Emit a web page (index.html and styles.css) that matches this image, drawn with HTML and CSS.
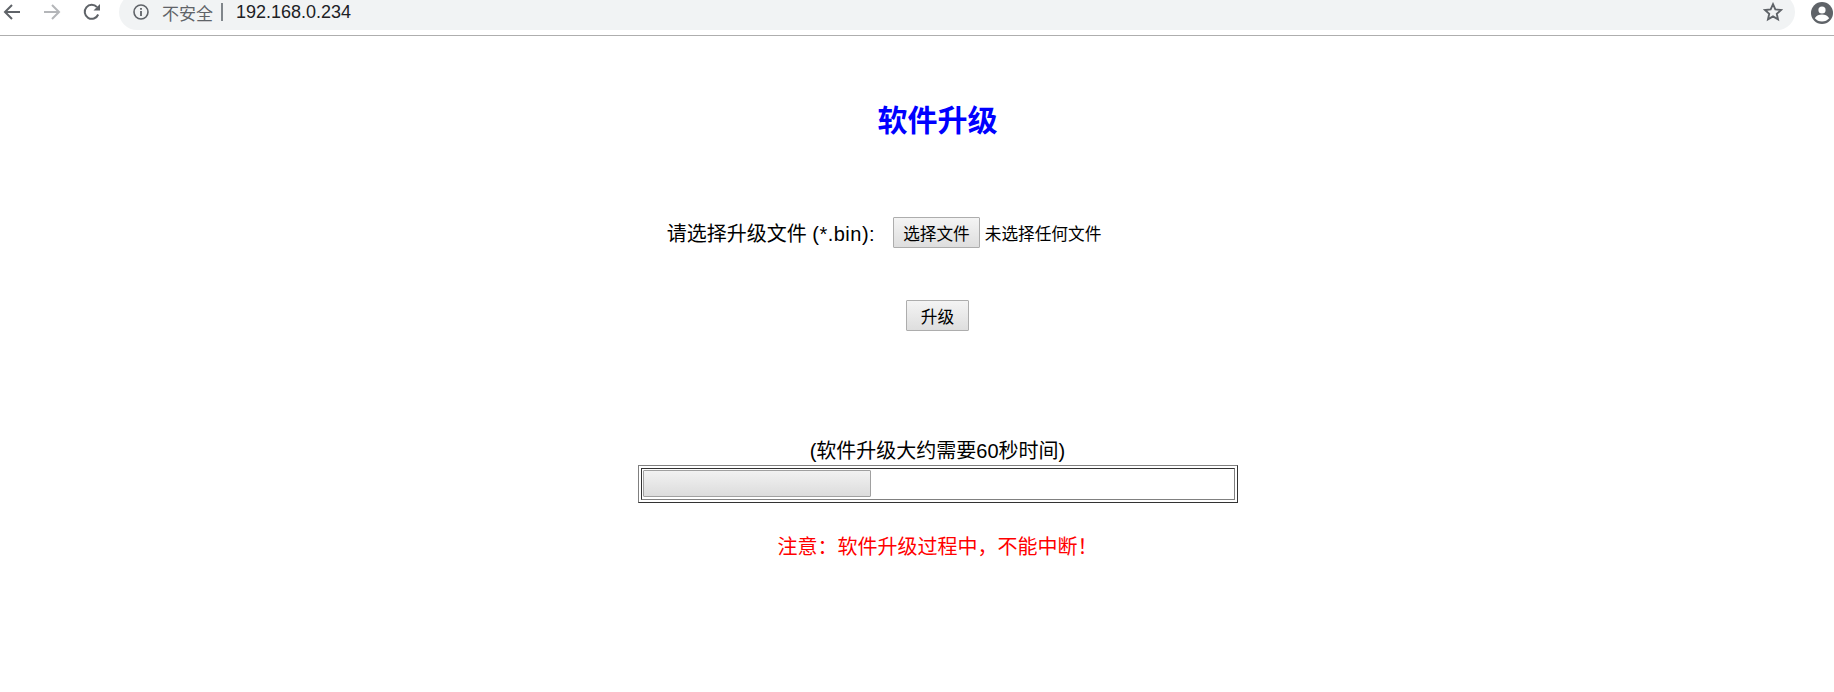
FILE: index.html
```html
<!DOCTYPE html>
<html lang="zh-CN">
<head>
    <meta charset="UTF-8">
    <meta name="viewport" content="width=device-width, initial-scale=1.0">
    <title>软件升级</title>
    <link rel="stylesheet" href="styles.css">
</head>
<body>
    <div class="toolbar">
        <div class="nav-buttons">
            <svg class="nav-icon" viewBox="0 0 18 18"><path d="M17 9H2.500M9 2L2 9l7 7" fill="none" stroke="#5f6368" stroke-width="2"/></svg>
            <svg class="nav-icon" viewBox="0 0 18 18"><path d="M1 9h14.500M9 2l7 7-7 7" fill="none" stroke="#b4b6b9" stroke-width="2"/></svg>
            <svg class="nav-icon" viewBox="0 0 18 18"><path d="M15.200 11.500A7 7 0 1 1 14 4.200" fill="none" stroke="#5f6368" stroke-width="2"/><path d="M10.500 7.500H17V1z" fill="#5f6368"/></svg>
        </div>
        <div class="address-bar">
            <svg class="info-icon" viewBox="0 0 16 16"><circle cx="8" cy="8" r="7" fill="none" stroke="#5f6368" stroke-width="1.600"/><path d="M7.100 7h1.800v5H7.100zM7.100 4h1.800v1.800H7.100z" fill="#5f6368"/></svg>
            <span class="security">不安全</span>
            <span class="divider"></span>
            <span class="url">192.168.0.234</span>
            <svg class="star-icon" viewBox="0 0 18 18"><path d="M9 2l2.100 4.700 5.100.5-3.800 3.400 1.100 5L9 13l-4.500 2.600 1.100-5-3.800-3.400 5.100-.5z" fill="none" stroke="#5f6368" stroke-width="1.700"/></svg>
        </div>
        <svg class="account-icon" viewBox="0 0 22 22"><circle cx="11" cy="11" r="11" fill="#5f6368"/><circle cx="11" cy="8" r="3.600" fill="#fff"/><path d="M3.800 16.200c1.600-2.600 4.400-3.600 7.200-3.600s5.600 1 7.200 3.600c-1.700 2-4.300 3.300-7.200 3.300s-5.500-1.300-7.200-3.300z" fill="#fff"/></svg>
    </div>

    <div class="container">
        <h1>软件升级</h1>
        <div class="file-row">
            <span class="file-label">请选择升级文件 <span class="file-ext">(*.bin):</span></span>
            <button class="btn">选择文件</button>
            <span class="file-name">未选择任何文件</span>
        </div>
        <button class="btn btn-upgrade">升级</button>
        <p class="hint">(软件升级大约需要60秒时间)</p>
        <div class="progress-outer">
            <div class="progress-inner">
                <div class="progress-bar"></div>
            </div>
        </div>
        <p class="warning">注意：软件升级过程中，不能中断！</p>
    </div>
</body>
</html>
```

FILE: styles.css
```css
body {
    margin: 0;
    background-color: #ffffff;
    color: #000000;
    font-family: "Liberation Sans", "Noto Sans CJK SC", sans-serif;
    font-size: 20px;
}

.toolbar {
    display: flex;
    align-items: flex-start;
    height: 35px;
    border-bottom: 1px solid #aeaeae;
    overflow: hidden;
}

.nav-buttons {
    display: flex;
    gap: 22px;
    padding: 3px 0 0 3px;
    width: 119px;
    box-sizing: border-box;
}

.nav-icon {
    width: 18px;
    height: 18px;
}

.address-bar {
    display: flex;
    align-items: center;
    width: 1676px;
    height: 36px;
    margin-top: -6px;
    padding: 0 10px 0 14px;
    box-sizing: border-box;
    background-color: #f1f3f4;
    border-radius: 18px;
}

.info-icon {
    width: 16px;
    height: 16px;
}

.security {
    margin-left: 13px;
    font-size: 17px;
    color: #5f6368;
}

.divider {
    width: 2px;
    height: 18px;
    margin: 0 13px 0 8px;
    background-color: #80868b;
}

.url {
    font-size: 18px;
    color: #202124;
}

.star-icon {
    width: 20px;
    height: 20px;
    margin-left: auto;
    margin-right: 2px;
}

.account-icon {
    width: 22px;
    height: 22px;
    margin: 2px 0 0 16px;
}

.container {
    display: flex;
    flex-direction: column;
    align-items: center;
    padding-left: 41px;
}

h1 {
    margin: 66px 0 0;
    font-size: 30px;
    line-height: 38px;
    color: #0000ff;
}

.file-row {
    display: flex;
    align-items: center;
    margin-top: 77px;
    margin-right: 107px;
}

.file-label {
    margin-right: 18px;
}

.file-ext {
    letter-spacing: 0.5px;
}

.btn {
    height: 31px;
    padding: 0 9px;
    border: 1px solid #adadad;
    border-radius: 1px;
    background: linear-gradient(#f4f4f4, #dedede);
    color: #000000;
    font-family: inherit;
    font-size: 16.67px;
}

.file-name {
    margin-left: 5px;
    font-size: 16.67px;
}

.btn-upgrade {
    width: 63px;
    margin-top: 52px;
    padding: 0;
}

.hint {
    margin: 107px 0 0;
    line-height: 26px;
}

.progress-outer {
    width: 600px;
    height: 38px;
    box-sizing: border-box;
    margin-top: 1px;
    padding: 2px;
    border: 1px solid;
    border-color: #808080 #333333 #333333 #808080;
}

.progress-inner {
    height: 100%;
    box-sizing: border-box;
    padding: 1px;
    border: 1px solid;
    border-color: #333333 #808080 #808080 #333333;
}

.progress-bar {
    width: 228px;
    height: 27px;
    box-sizing: border-box;
    border: 1px solid #a0a0a0;
    border-radius: 1px;
    background: linear-gradient(#f2f2f2, #dcdcdc);
}

.warning {
    margin: 31px 0 0;
    line-height: 26px;
    color: #ff0000;
}
```
